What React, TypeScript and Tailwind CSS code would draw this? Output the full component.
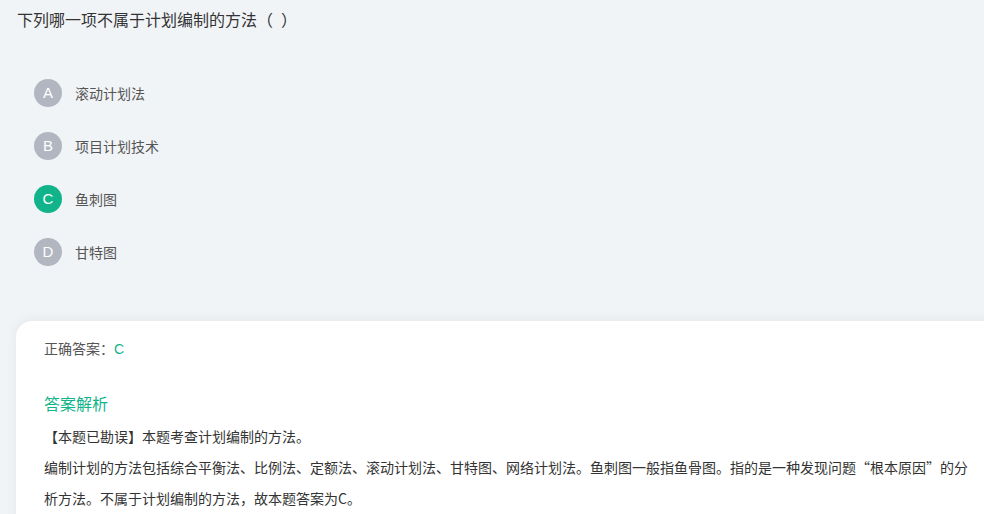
import React from "react";

const options = [
  { key: "A", text: "滚动计划法", correct: false },
  { key: "B", text: "项目计划技术", correct: false },
  { key: "C", text: "鱼刺图", correct: true },
  { key: "D", text: "甘特图", correct: false },
];

export default function App() {
  return (
    <div
      className="w-[984px] h-[514px] overflow-hidden bg-[#f1f4f7]"
      style={{ fontFamily: '"Microsoft YaHei", "Noto Sans CJK SC", "Noto Sans", sans-serif' }}
    >
      <div className="pl-[17px] pt-[8px] text-[16px] leading-[22px] text-[#333]">
        下列哪一项不属于计划编制的方法（{"\u2002"}）
      </div>
      <div className="mt-[49px] pl-[34px] flex flex-col gap-[25px]">
        {options.map((o) => (
          <div key={o.key} className="flex items-center h-[28px]">
            <div
              className={
                "w-[28px] h-[28px] rounded-full flex items-center justify-center text-white text-[15px] " +
                (o.correct ? "bg-[#11b48a]" : "bg-[#b1b6c1]")
              }
              style={{ fontFamily: '"Liberation Sans", Arial, sans-serif' }}
            >
              {o.key}
            </div>
            <div className="ml-[13px] text-[14px] text-[#555]">{o.text}</div>
          </div>
        ))}
      </div>
      <div className="mt-[55px] ml-[16px] w-[1000px] h-[300px] bg-white rounded-tl-[16px] shadow-[0_-2px_12px_rgba(0,0,0,0.05)] pl-[28px] pt-[17px]">
        <div className="text-[14px] leading-[20px] text-[#555]">
          正确答案：<span className="text-[#11b48a]" style={{ fontFamily: '"Liberation Sans", Arial, sans-serif' }}>C</span>
        </div>
        <div className="mt-[33px] text-[16px] leading-[22px] text-[#11b48a]">答案解析</div>
        <div className="mt-[7px] w-[934px] text-[14px] leading-[31px] text-[#333]">
          <div>【本题已勘误】本题考查计划编制的方法。</div>
          <div>
            编制计划的方法包括综合平衡法、比例法、定额法、滚动计划法、甘特图、网络计划法。鱼刺图一般指鱼骨图。指的是一种发现问题“根本原因”的分析方法。不属于计划编制的方法，故本题答案为C。
          </div>
        </div>
      </div>
    </div>
  );
}
